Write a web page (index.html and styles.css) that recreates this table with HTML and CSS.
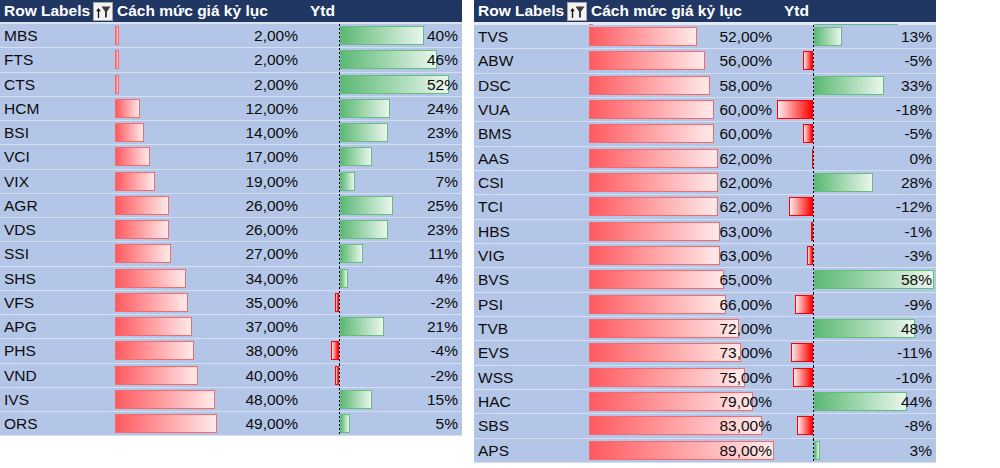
FILE: index.html
```html
<!DOCTYPE html>
<html lang="vi">
<head>
    <meta charset="UTF-8">
    <title>Cách mức giá kỷ lục</title>
    <link rel="stylesheet" href="styles.css">
</head>
<body>
<div class="sheet">

    <div class="pivot">
        <div class="head">
            <div class="head-cell">Row Labels
                <span class="filter">
                    <svg width="18" height="17" viewBox="0 0 18 17"><path d="M4.5 15V6.5" stroke="#111" stroke-width="1.3"/><path d="M2.2 8.2L4.5 5L6.8 8.2Z" fill="#111"/><path d="M7.5 3.5H16.5L13 8.5V14L11 15V8.5Z" fill="#3c3c3c"/></svg>
                </span>
            </div>
            <div class="head-cell">Cách mức giá kỷ lục</div>
            <div class="head-cell ytd-head">Ytd</div>
        </div>
        <div class="body">
            <div class="row"><div class="label">MBS</div><div class="val"><span class="bar red" style="width:4px"></span><span class="num">2,00%</span></div><div class="ytd"><span class="bar pos" style="width:84px"></span><span class="axis"></span><span class="num">40%</span></div></div>
            <div class="row"><div class="label">FTS</div><div class="val"><span class="bar red" style="width:4px"></span><span class="num">2,00%</span></div><div class="ytd"><span class="bar pos" style="width:97px"></span><span class="axis"></span><span class="num">46%</span></div></div>
            <div class="row"><div class="label">CTS</div><div class="val"><span class="bar red" style="width:4px"></span><span class="num">2,00%</span></div><div class="ytd"><span class="bar pos" style="width:109px"></span><span class="axis"></span><span class="num">52%</span></div></div>
            <div class="row"><div class="label">HCM</div><div class="val"><span class="bar red" style="width:25px"></span><span class="num">12,00%</span></div><div class="ytd"><span class="bar pos" style="width:50px"></span><span class="axis"></span><span class="num">24%</span></div></div>
            <div class="row"><div class="label">BSI</div><div class="val"><span class="bar red" style="width:29px"></span><span class="num">14,00%</span></div><div class="ytd"><span class="bar pos" style="width:48px"></span><span class="axis"></span><span class="num">23%</span></div></div>
            <div class="row"><div class="label">VCI</div><div class="val"><span class="bar red" style="width:35px"></span><span class="num">17,00%</span></div><div class="ytd"><span class="bar pos" style="width:32px"></span><span class="axis"></span><span class="num">15%</span></div></div>
            <div class="row"><div class="label">VIX</div><div class="val"><span class="bar red" style="width:40px"></span><span class="num">19,00%</span></div><div class="ytd"><span class="bar pos" style="width:15px"></span><span class="axis"></span><span class="num">7%</span></div></div>
            <div class="row"><div class="label">AGR</div><div class="val"><span class="bar red" style="width:54px"></span><span class="num">26,00%</span></div><div class="ytd"><span class="bar pos" style="width:53px"></span><span class="axis"></span><span class="num">25%</span></div></div>
            <div class="row"><div class="label">VDS</div><div class="val"><span class="bar red" style="width:54px"></span><span class="num">26,00%</span></div><div class="ytd"><span class="bar pos" style="width:48px"></span><span class="axis"></span><span class="num">23%</span></div></div>
            <div class="row"><div class="label">SSI</div><div class="val"><span class="bar red" style="width:56px"></span><span class="num">27,00%</span></div><div class="ytd"><span class="bar pos" style="width:23px"></span><span class="axis"></span><span class="num">11%</span></div></div>
            <div class="row"><div class="label">SHS</div><div class="val"><span class="bar red" style="width:71px"></span><span class="num">34,00%</span></div><div class="ytd"><span class="bar pos" style="width:8px"></span><span class="axis"></span><span class="num">4%</span></div></div>
            <div class="row"><div class="label">VFS</div><div class="val"><span class="bar red" style="width:73px"></span><span class="num">35,00%</span></div><div class="ytd"><span class="bar neg" style="width:4px"></span><span class="axis"></span><span class="num">-2%</span></div></div>
            <div class="row"><div class="label">APG</div><div class="val"><span class="bar red" style="width:77px"></span><span class="num">37,00%</span></div><div class="ytd"><span class="bar pos" style="width:44px"></span><span class="axis"></span><span class="num">21%</span></div></div>
            <div class="row"><div class="label">PHS</div><div class="val"><span class="bar red" style="width:79px"></span><span class="num">38,00%</span></div><div class="ytd"><span class="bar neg" style="width:8px"></span><span class="axis"></span><span class="num">-4%</span></div></div>
            <div class="row"><div class="label">VND</div><div class="val"><span class="bar red" style="width:83px"></span><span class="num">40,00%</span></div><div class="ytd"><span class="bar neg" style="width:4px"></span><span class="axis"></span><span class="num">-2%</span></div></div>
            <div class="row"><div class="label">IVS</div><div class="val"><span class="bar red" style="width:100px"></span><span class="num">48,00%</span></div><div class="ytd"><span class="bar pos" style="width:32px"></span><span class="axis"></span><span class="num">15%</span></div></div>
            <div class="row"><div class="label">ORS</div><div class="val"><span class="bar red" style="width:102px"></span><span class="num">49,00%</span></div><div class="ytd"><span class="bar pos" style="width:10px"></span><span class="axis"></span><span class="num">5%</span></div></div>
        </div>
    </div>

    <div class="pivot pivot-right">
        <div class="head">
            <div class="head-cell">Row Labels
                <span class="filter">
                    <svg width="18" height="17" viewBox="0 0 18 17"><path d="M4.5 15V6.5" stroke="#111" stroke-width="1.3"/><path d="M2.2 8.2L4.5 5L6.8 8.2Z" fill="#111"/><path d="M7.5 3.5H16.5L13 8.5V14L11 15V8.5Z" fill="#3c3c3c"/></svg>
                </span>
            </div>
            <div class="head-cell">Cách mức giá kỷ lục</div>
            <div class="head-cell ytd-head">Ytd</div>
        </div>
        <div class="peek">
            <div></div>
            <div class="val"><span class="bar red" style="width:4px"></span></div>
            <div class="ytd"><span class="bar pos" style="width:84px"></span></div>
        </div>
        <div class="body">
            <div class="row"><div class="label">TVS</div><div class="val"><span class="bar red" style="width:108px"></span><span class="num">52,00%</span></div><div class="ytd"><span class="bar pos" style="width:28px"></span><span class="axis"></span><span class="num">13%</span></div></div>
            <div class="row"><div class="label">ABW</div><div class="val"><span class="bar red" style="width:116px"></span><span class="num">56,00%</span></div><div class="ytd"><span class="bar neg" style="width:10px"></span><span class="axis"></span><span class="num">-5%</span></div></div>
            <div class="row"><div class="label">DSC</div><div class="val"><span class="bar red" style="width:121px"></span><span class="num">58,00%</span></div><div class="ytd"><span class="bar pos" style="width:70px"></span><span class="axis"></span><span class="num">33%</span></div></div>
            <div class="row"><div class="label">VUA</div><div class="val"><span class="bar red" style="width:125px"></span><span class="num">60,00%</span></div><div class="ytd"><span class="bar neg" style="width:36px"></span><span class="axis"></span><span class="num">-18%</span></div></div>
            <div class="row"><div class="label">BMS</div><div class="val"><span class="bar red" style="width:125px"></span><span class="num">60,00%</span></div><div class="ytd"><span class="bar neg" style="width:10px"></span><span class="axis"></span><span class="num">-5%</span></div></div>
            <div class="row"><div class="label">AAS</div><div class="val"><span class="bar red" style="width:129px"></span><span class="num">62,00%</span></div><div class="ytd"><span class="bar neg zero" style="width:1px"></span><span class="axis"></span><span class="num">0%</span></div></div>
            <div class="row"><div class="label">CSI</div><div class="val"><span class="bar red" style="width:129px"></span><span class="num">62,00%</span></div><div class="ytd"><span class="bar pos" style="width:59px"></span><span class="axis"></span><span class="num">28%</span></div></div>
            <div class="row"><div class="label">TCI</div><div class="val"><span class="bar red" style="width:129px"></span><span class="num">62,00%</span></div><div class="ytd"><span class="bar neg" style="width:24px"></span><span class="axis"></span><span class="num">-12%</span></div></div>
            <div class="row"><div class="label">HBS</div><div class="val"><span class="bar red" style="width:131px"></span><span class="num">63,00%</span></div><div class="ytd"><span class="bar neg" style="width:2px"></span><span class="axis"></span><span class="num">-1%</span></div></div>
            <div class="row"><div class="label">VIG</div><div class="val"><span class="bar red" style="width:131px"></span><span class="num">63,00%</span></div><div class="ytd"><span class="bar neg" style="width:6px"></span><span class="axis"></span><span class="num">-3%</span></div></div>
            <div class="row"><div class="label">BVS</div><div class="val"><span class="bar red" style="width:135px"></span><span class="num">65,00%</span></div><div class="ytd"><span class="bar pos" style="width:120px"></span><span class="axis"></span><span class="num">58%</span></div></div>
            <div class="row"><div class="label">PSI</div><div class="val"><span class="bar red" style="width:137px"></span><span class="num">66,00%</span></div><div class="ytd"><span class="bar neg" style="width:18px"></span><span class="axis"></span><span class="num">-9%</span></div></div>
            <div class="row"><div class="label">TVB</div><div class="val"><span class="bar red" style="width:150px"></span><span class="num">72,00%</span></div><div class="ytd"><span class="bar pos" style="width:101px"></span><span class="axis"></span><span class="num">48%</span></div></div>
            <div class="row"><div class="label">EVS</div><div class="val"><span class="bar red" style="width:152px"></span><span class="num">73,00%</span></div><div class="ytd"><span class="bar neg" style="width:22px"></span><span class="axis"></span><span class="num">-11%</span></div></div>
            <div class="row"><div class="label">WSS</div><div class="val"><span class="bar red" style="width:156px"></span><span class="num">75,00%</span></div><div class="ytd"><span class="bar neg" style="width:20px"></span><span class="axis"></span><span class="num">-10%</span></div></div>
            <div class="row"><div class="label">HAC</div><div class="val"><span class="bar red" style="width:164px"></span><span class="num">79,00%</span></div><div class="ytd"><span class="bar pos" style="width:93px"></span><span class="axis"></span><span class="num">44%</span></div></div>
            <div class="row"><div class="label">SBS</div><div class="val"><span class="bar red" style="width:173px"></span><span class="num">83,00%</span></div><div class="ytd"><span class="bar neg" style="width:16px"></span><span class="axis"></span><span class="num">-8%</span></div></div>
            <div class="row"><div class="label">APS</div><div class="val"><span class="bar red" style="width:185px"></span><span class="num">89,00%</span></div><div class="ytd"><span class="bar pos" style="width:6px"></span><span class="axis"></span><span class="num">3%</span></div></div>
        </div>
    </div>

</div>
</body>
</html>
```

FILE: styles.css
```css
body {
    margin: 0;
    background: #fff;
    font-family: "Liberation Sans", Arial, sans-serif;
    font-size: 15.5px;
    color: #0c0c0c;
}
.sheet {
    display: flex;
    gap: 12px;
    align-items: flex-start;
}
.pivot {
    width: 462px;
}
.head,
.row,
.peek {
    display: grid;
    grid-template-columns: 113px 189px 160px;
}
.head {
    height: 22px;
    background: #203764;
    color: #fff;
    font-weight: bold;
}
.head-cell {
    display: flex;
    align-items: center;
    justify-content: space-between;
    padding-left: 4px;
    white-space: nowrap;
}
.ytd-head {
    padding-left: 8px;
}
.filter {
    display: flex;
    align-items: center;
    justify-content: center;
    width: 20px;
    height: 19px;
    box-sizing: border-box;
    background: #f3f3f3;
    border: 1px solid #a6a6a6;
}
.body {
    border-top: 2px solid #dbe3f1;
}
.row {
    height: 24.25px;
    box-sizing: border-box;
    border-bottom: 1px solid #d6dfef;
    background: #b4c6e7;
}
.pivot-right .row {
    height: 24.33px;
}
.pivot-right .body {
    border-top: none;
}
.peek {
    height: 3px;
    overflow: hidden;
    background: #e4e9f3;
}
.peek .bar {
    top: 2px;
}
.label {
    display: flex;
    align-items: center;
    padding: 1px 0 0 4px;
}
.val,
.ytd {
    position: relative;
    display: flex;
    align-items: center;
    justify-content: flex-end;
    padding: 1px 4px 0 0;
}
.num {
    position: relative;
}
.bar {
    position: absolute;
    top: 2px;
    height: 19px;
    box-sizing: border-box;
    border: 1px solid;
}
.red {
    left: 2px;
    border-color: #f8696b;
    background: linear-gradient(to right, #ff5a5f, #ffeaea);
}
.pos {
    left: 38px;
    border-color: #63be7b;
    background: linear-gradient(to right, #5cb974, #eaf6ed);
}
.neg {
    right: 123px;
    border-color: #ff0000;
    background: linear-gradient(to right, #ffeaea, #ff0000);
}
.zero {
    border-width: 0 0 0 1px;
}
.axis {
    position: absolute;
    left: 37px;
    top: 0;
    bottom: -1px;
    width: 1px;
    background: repeating-linear-gradient(to bottom, #000 0 2px, transparent 2px 4px);
}
```
